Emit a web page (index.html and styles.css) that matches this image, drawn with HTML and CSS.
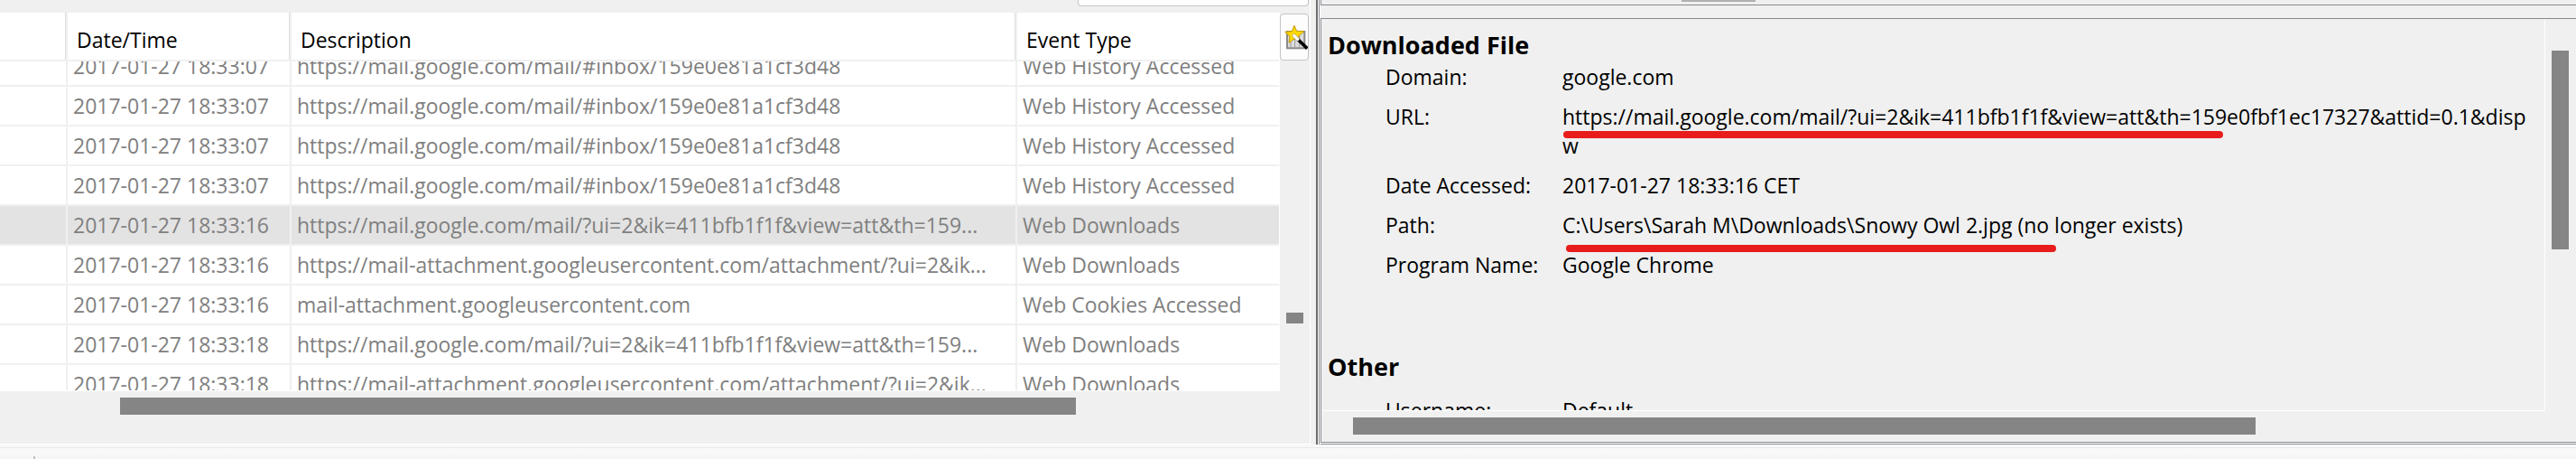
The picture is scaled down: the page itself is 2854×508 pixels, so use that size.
FILE: index.html
```html
<!DOCTYPE html>
<html lang="en">
<head>
<meta charset="utf-8">
<title>Web artifacts</title>
<link rel="stylesheet" href="styles.css">
</head>
<body>
<div class="app">
  <main class="split">
    <section class="results">
      <div class="toolbar"><button class="toolbar-button" type="button" aria-label="Save table"></button></div>
      <div class="results-body">
        <div class="table-view">
          <table class="events">
            <colgroup><col class="col-lead"><col class="col-date"><col class="col-desc"><col></colgroup>
            <thead>
              <tr><th></th><th>Date/Time</th><th>Description</th><th>Event Type</th></tr>
            </thead>
            <tbody>
              <tr class="partial"><td></td><td><div class="clip">2017-01-27 18:33:07</div></td><td><div class="clip">https://mail.google.com/mail/#inbox/159e0e81a1cf3d48</div></td><td><div class="clip">Web History Accessed</div></td></tr>
              <tr><td></td><td>2017-01-27 18:33:07</td><td>https://mail.google.com/mail/#inbox/159e0e81a1cf3d48</td><td>Web History Accessed</td></tr>
              <tr><td></td><td>2017-01-27 18:33:07</td><td>https://mail.google.com/mail/#inbox/159e0e81a1cf3d48</td><td>Web History Accessed</td></tr>
              <tr><td></td><td>2017-01-27 18:33:07</td><td>https://mail.google.com/mail/#inbox/159e0e81a1cf3d48</td><td>Web History Accessed</td></tr>
              <tr class="selected"><td></td><td>2017-01-27 18:33:16</td><td>https://mail.google.com/mail/?ui=2&amp;ik=411bfb1f1f&amp;view=att&amp;th=159...</td><td>Web Downloads</td></tr>
              <tr><td></td><td>2017-01-27 18:33:16</td><td>https://mail-attachment.googleusercontent.com/attachment/?ui=2&amp;ik...</td><td>Web Downloads</td></tr>
              <tr><td></td><td>2017-01-27 18:33:16</td><td>mail-attachment.googleusercontent.com</td><td>Web Cookies Accessed</td></tr>
              <tr><td></td><td>2017-01-27 18:33:18</td><td>https://mail.google.com/mail/?ui=2&amp;ik=411bfb1f1f&amp;view=att&amp;th=159...</td><td>Web Downloads</td></tr>
              <tr><td></td><td>2017-01-27 18:33:18</td><td>https://mail-attachment.googleusercontent.com/attachment/?ui=2&amp;ik...</td><td>Web Downloads</td></tr>
            </tbody>
          </table>
        </div>
        <div class="results-side">
          <button class="column-button" type="button" aria-label="Choose columns">
            <svg class="column-icon" viewBox="57 72 90 90" aria-hidden="true">
              <rect x="78" y="99" width="58" height="55" fill="#dcdcdc" stroke="#8a8a8a" stroke-width="6"/>
              <path d="M90 99v52M104 99v52M119 99v52" stroke="#9a9a9a" stroke-width="3"/>
              <path d="M102 79l8 18 25 1-19 16 5 18-19-9-18 13 3-21-16-15 23-2z" fill="#ffd800" stroke="#c39a08" stroke-width="3"/>
              <path d="M112 123l33 32" stroke="#000" stroke-width="11"/>
              <path d="M101 112l12 12" stroke="#999" stroke-width="12" stroke-linecap="round"/>
              <path d="M101 112l12 12" stroke="#fff" stroke-width="9" stroke-linecap="round"/>
            </svg>
          </button>
          <div class="row-thumb"></div>
        </div>
      </div>
      <div class="results-scroll"><div class="column-thumb"></div></div>
    </section>
    <section class="details">
      <div class="details-top"><div class="grip"></div></div>
      <div class="details-panel">
        <div class="details-row">
          <article class="document">
            <h2>Downloaded File</h2>
            <dl>
              <dt>Domain:</dt><dd>google.com</dd>
              <dt>URL:</dt><dd class="marked">https://mail.google.com/mail/?ui=2&amp;ik=411bfb1f1f&amp;view=att&amp;th=159e0fbf1ec17327&amp;attid=0.1&amp;disp<br>w<span class="mark mark-url"></span></dd>
              <dt>Date Accessed:</dt><dd>2017-01-27 18:33:16 CET</dd>
              <dt>Path:</dt><dd class="marked">C:\Users\Sarah M\Downloads\Snowy Owl 2.jpg (no longer exists)<span class="mark mark-path"></span></dd>
              <dt>Program Name:</dt><dd>Google Chrome</dd>
            </dl>
            <h2 class="next">Other</h2>
            <dl class="spaced">
              <dt>Username:</dt><dd>Default</dd>
            </dl>
          </article>
          <div class="details-side"><div class="page-thumb"></div></div>
        </div>
        <div class="details-scroll"><div class="line-thumb"></div></div>
      </div>
    </section>
  </main>
  <footer class="status"><span class="tick"></span></footer>
</div>
</body>
</html>
```

FILE: styles.css
```css
* { box-sizing: border-box; }

body {
  margin: 0;
  background: #f0f0f0;
  color: #000;
  font-family: "Open Sans", "Noto Sans", sans-serif;
  font-size: 23px;
  line-height: 32px;
}

.app {
  display: flex;
  flex-direction: column;
  height: 100vh;
  overflow: hidden;
}

.split {
  flex: 1;
  min-height: 0;
  display: grid;
  grid-template-columns: 1458fr 1396fr;
  grid-template-rows: minmax(0, 1fr);
}

/* Results table */
.results {
  display: flex;
  flex-direction: column;
  min-width: 0;
  margin-right: 6px;
  border-right: 1px solid #fff;
}

.toolbar {
  height: 14px;
  padding-right: 1px;
  display: flex;
  justify-content: flex-end;
  align-items: flex-start;
}

.toolbar-button {
  width: 256px;
  height: 7px;
  padding: 0;
  border: 1px solid #c4c4c4;
  border-top: 0;
  border-radius: 0 0 4px 4px;
  background: #fdfdfd;
}

.results-body {
  flex: 1;
  min-height: 0;
  display: grid;
  grid-template-columns: minmax(0, 1fr) 33px;
  grid-template-rows: minmax(0, 1fr);
}

.table-view {
  overflow: hidden;
  border: solid #fff;
  border-width: 0 1px 1px 0;
}

.events {
  width: 100%;
  table-layout: fixed;
  border-collapse: separate;
  border-spacing: 0;
  background: #fff;
  white-space: nowrap;
}

.col-lead { width: 75px; }
.col-date { width: 248px; }
.col-desc { width: 804px; }

.events th,
.events td {
  overflow: hidden;
  border: solid #f0f0f0;
  border-width: 0 2px 2px 0;
  text-align: left;
}

.events th:last-child,
.events td:last-child { border-right: 0; }

.events th {
  height: 54px;
  padding: 8px 10px 0;
  font-weight: 400;
  box-shadow: inset -1px 0 #dedede;
}

.events th:last-child { box-shadow: none; }

.events td {
  height: 44px;
  padding: 0 6px;
  color: #808080;
}

.events .partial td {
  height: 28px;
  vertical-align: bottom;
}

.clip {
  display: flex;
  align-items: flex-end;
  height: 26px;
  padding-bottom: 5px;
  overflow: hidden;
}

.selected td { background: #e3e3e3; }

.results-side {
  display: flex;
  flex-direction: column;
  align-items: flex-start;
}

.column-button {
  width: 32px;
  height: 52px;
  margin-top: 1px;
  padding: 0;
  display: flex;
  align-items: center;
  border: 1px solid #c4c4c4;
  border-radius: 4px;
  background: #fdfdfd;
}

.column-icon {
  width: 30px;
  height: 30px;
  fill: none;
}

.row-thumb,
.column-thumb,
.page-thumb,
.line-thumb { background: #858585; }

.row-thumb {
  width: 19px;
  height: 12px;
  margin: 279px 0 0 7px;
}

.results-scroll {
  height: 59px;
  padding-top: 7px;
  border-bottom: 1px solid #fff;
}

.column-thumb {
  width: 73%;
  height: 19px;
  margin-left: 133px;
}

/* Details */
.details {
  display: flex;
  flex-direction: column;
  min-width: 0;
  border-left: 2px solid #6b6b6b;
  box-shadow: inset 1px 0 #fff, inset 2px 0 #858a90, inset 3px 0 #fff, inset 0 -1px #858a90, inset 0 -2px #fff;
  padding: 0 0 2px 3px;
}

.details-top {
  height: 6px;
  margin-bottom: 14px;
  border: solid #858a90;
  border-width: 0 0 1px 1px;
}

.grip {
  width: 82px;
  height: 2px;
  margin-left: 399px;
  background: #b0b0b0;
}

.details-panel {
  flex: 1;
  min-height: 0;
  display: flex;
  flex-direction: column;
  border: solid #858a90;
  border-width: 1px 0 1px 1px;
  padding: 1px 0 0 1px;
}

.details-row {
  flex: 1;
  min-height: 0;
  display: grid;
  grid-template-columns: minmax(0, 1fr) 34px;
  grid-template-rows: minmax(0, 1fr);
}

.document {
  overflow: hidden;
  padding: 10px 0 0 6px;
  border: solid #fff;
  border-width: 0 1px 1px 0;
  white-space: nowrap;
}

.document h2 {
  margin: 0;
  font-size: 27px;
  line-height: 36px;
  font-weight: 700;
}

.document .next { margin-top: 79px; }

dl {
  display: grid;
  grid-template-columns: 196px minmax(0, 1fr);
  row-gap: 12px;
  margin: 1px 0 12px;
  padding-left: 64px;
}

.document .spaced { margin-top: 14px; }

dd { margin: 0; }

.marked { position: relative; }

/* Red highlighter strokes drawn over the values */
.mark {
  position: absolute;
  height: 8px;
  border-radius: 4px;
  background: #e81c1c;
}

.mark-url {
  left: 1px;
  top: 32px;
  width: 731px;
}

.mark-path {
  left: 4px;
  top: 38px;
  width: 543px;
}

.details-side { padding: 34px 8px 0 7px; }

.page-thumb { height: 220px; }

.details-scroll {
  height: 34px;
  padding-top: 7px;
}

.line-thumb {
  width: 72%;
  height: 19px;
  margin-left: 34px;
}

/* Status bar */
.status {
  flex: none;
  height: 16px;
  padding: 12px 0 0 37px;
  border-top: 1px solid #fff;
  box-shadow: inset 0 1px #f0f0f0, inset 0 2px #fff, inset 0 3px #e6e6e6;
  background: linear-gradient(#fbfbfb, #f5f5f5);
}

.tick {
  display: block;
  width: 2px;
  height: 3px;
  background: #c0c0c0;
}
```
